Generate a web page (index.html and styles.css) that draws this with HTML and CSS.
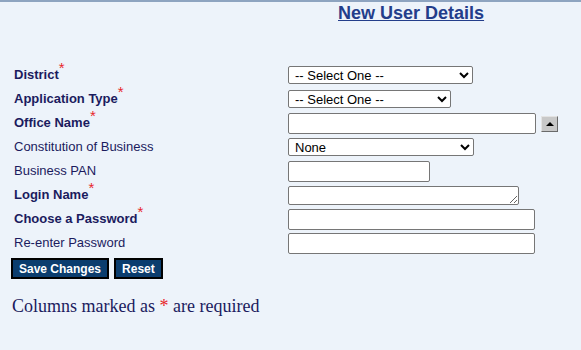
FILE: index.html
```html
<!DOCTYPE html>
<html lang="en">
<head>
  <meta charset="UTF-8"/>
  <title>New User Details</title>
  <link rel="stylesheet" href="styles.css">
</head>
<body>
<div class="page">
  <h1 class="title">New User Details</h1>

  <form class="user-form">
    <label class="lbl req">District<span class="star">*</span></label>
    <div class="ctl">
      <select class="sel w185"><option>-- Select One --</option></select>
    </div>

    <label class="lbl req">Application Type<span class="star">*</span></label>
    <div class="ctl">
      <select class="sel w163"><option>-- Select One --</option></select>
    </div>

    <label class="lbl req">Office Name<span class="star">*</span></label>
    <div class="ctl">
      <input class="txt w248" type="text">
      <span class="spin"><span class="tri"></span></span>
    </div>

    <label class="lbl">Constitution of Business</label>
    <div class="ctl">
      <select class="sel w186"><option>None</option></select>
    </div>

    <label class="lbl">Business PAN</label>
    <div class="ctl">
      <input class="txt w142" type="text">
    </div>

    <label class="lbl req">Login Name<span class="star">*</span></label>
    <div class="ctl">
      <textarea class="area" rows="1"></textarea>
    </div>

    <label class="lbl req">Choose a Password<span class="star">*</span></label>
    <div class="ctl">
      <input class="txt w247" type="password">
    </div>

    <label class="lbl">Re-enter Password</label>
    <div class="ctl">
      <input class="txt w247" type="password">
    </div>

    <div class="buttons">
      <button class="btn" type="button">Save Changes</button>
      <button class="btn" type="reset">Reset</button>
    </div>
  </form>

  <p class="note">Columns marked as <span class="star">*</span> are required</p>
</div>
</body>
</html>
```

FILE: styles.css
```css
html, body {
  margin: 0;
  padding: 0;
  background-color: #edf3fa;
}
body {
  border-top: 2px solid #8ea4c0;
  font-family: Arial, "Liberation Sans", sans-serif;
  color: #1b1b5e;
  height: 348px;
}
.page {
  padding: 0 0 0 11px;
}
.title {
  margin: 0;
  padding: 0 0 0 327px;
  font-size: 18px;
  line-height: 22px;
  font-weight: bold;
  color: #233d8a;
  text-decoration: underline;
}
.user-form {
  display: grid;
  grid-template-columns: 277px auto;
  grid-auto-rows: 24px;
  align-items: center;
  margin-top: 39px;
}
.lbl {
  padding-left: 3px;
  font-size: 13px;
  line-height: 16px;
  color: #1b1b5e;
}
.lbl.req {
  font-weight: bold;
}
.star {
  color: #e8262a;
  font-weight: normal;
  font-size: 15px;
  vertical-align: 6px;
  line-height: 0;
}
.ctl {
  display: flex;
  align-items: center;
  gap: 5px;
}
.sel {
  height: 18px;
  padding: 0 0 0 2px;
  border: 1px solid #767676;
  border-radius: 2px;
  background-color: #fff;
  font-family: Arial, "Liberation Sans", sans-serif;
  font-size: 13px;
  color: #000;
}
.w185 { width: 185px; }
.w163 { width: 163px; }
.w186 { width: 186px; }
.txt {
  box-sizing: border-box;
  height: 21px;
  padding: 1px 2px;
  border: 1px solid #767676;
  border-radius: 2px;
  background-color: #fff;
  font-size: 13px;
}
.w248 { width: 248px; }
.w247 { width: 247px; }
.w142 { width: 142px; }
.area {
  box-sizing: border-box;
  width: 231px;
  height: 19px;
  margin: 0;
  padding: 1px 2px;
  border: 1px solid #767676;
  border-radius: 2px;
  background-color: #fff;
  font-size: 13px;
  overflow: hidden;
  display: block;
}
.spin {
  box-sizing: border-box;
  width: 17px;
  height: 16px;
  margin-top: 1px;
  border: 1px solid;
  border-color: #e3e3e3 #6a6a6a #6a6a6a #e3e3e3;
  background-color: #c8c8c8;
  display: flex;
  align-items: center;
  justify-content: center;
}
.tri {
  width: 0;
  height: 0;
  border-left: 4px solid transparent;
  border-right: 4px solid transparent;
  border-bottom: 4px solid #000;
}
.buttons {
  grid-column: 1 / 3;
  display: flex;
  gap: 5px;
  align-self: end;
  height: 21px;
}
.btn {
  height: 21px;
  margin: 0;
  padding: 0 6px;
  border: 2px solid #000;
  background-color: #0b3d6e;
  color: #fff;
  font-family: Arial, "Liberation Sans", sans-serif;
  font-size: 12px;
  font-weight: bold;
}
.note {
  margin: 17px 0 0 1px;
  font-family: "Times New Roman", "Liberation Serif", serif;
  font-size: 18px;
  color: #1b1b5e;
}
.note .star {
  font-size: 18px;
  vertical-align: 0;
  line-height: normal;
}
```
